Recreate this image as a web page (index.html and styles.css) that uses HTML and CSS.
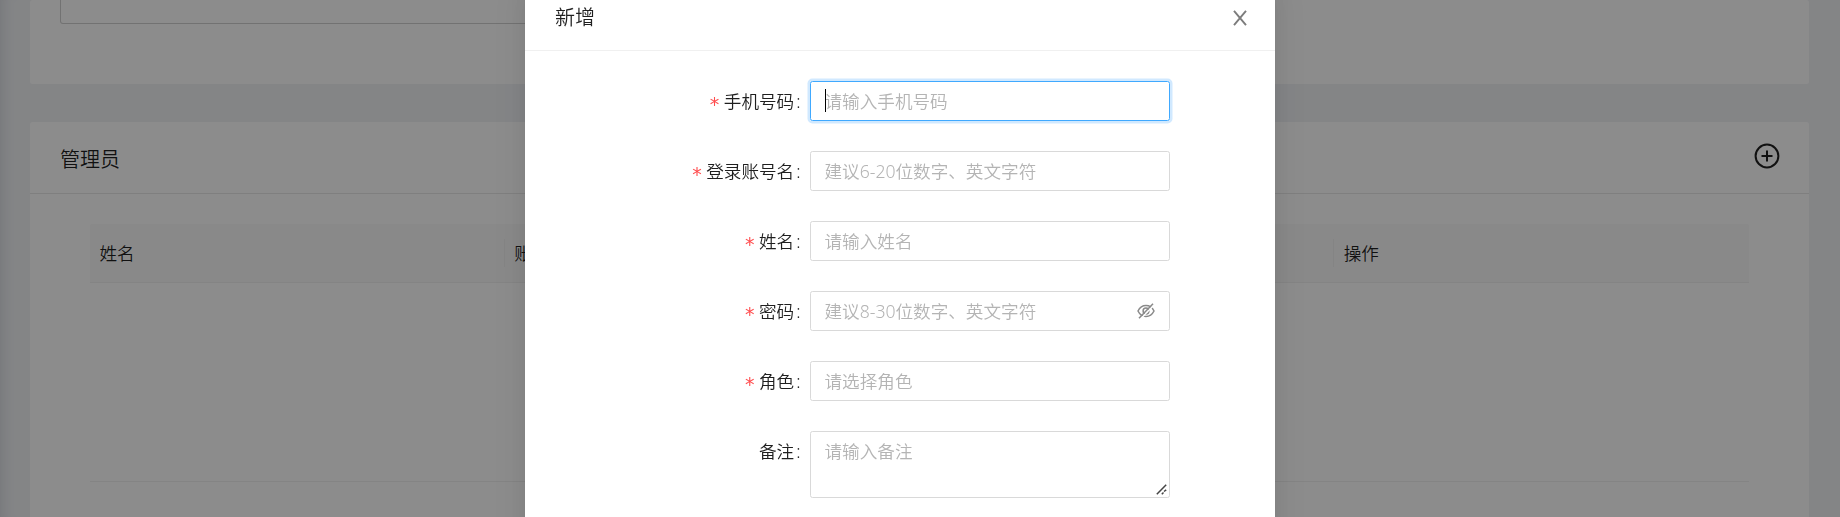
FILE: index.html
```html
<!DOCTYPE html>
<html lang="zh-CN">
<head>
<meta charset="utf-8">
<title>管理员</title>
<link rel="stylesheet" href="styles.css">
</head>
<body>
<main class="page">
  <section class="card card-top"><div class="top-field"></div></section>
  <section class="card card-admin">
    <header class="card-head">
      <h2 class="card-title">管理员</h2>
      <svg class="plus" viewBox="0 0 28 28"><circle cx="14" cy="14" r="11.4"/><path d="M14 8.5v11M8.5 14h11"/></svg>
    </header>
    <div class="table">
      <div class="row-head">
        <div class="cell">姓名</div><div class="cell">账号</div><div class="cell">角色</div><div class="cell">操作</div>
      </div>
      <div class="table-empty"></div>
    </div>
  </section>
</main>
<div class="mask">
  <div class="modal">
    <header class="modal-head">
      <h3 class="modal-title">新增</h3>
      <svg class="close" viewBox="0 0 14 16"><path d="M1 .8 13 15.2M13 .8 1 15.2"/></svg>
    </header>
    <form class="form">
      <div class="item"><label class="label"><span class="star">*</span>手机号码<span class="colon">:</span></label><div class="input focused"><span class="caret"></span>请输入手机号码</div></div>
      <div class="item"><label class="label"><span class="star">*</span>登录账号名<span class="colon">:</span></label><div class="input">建议6-20位数字、英文字符</div></div>
      <div class="item"><label class="label"><span class="star">*</span>姓名<span class="colon">:</span></label><div class="input">请输入姓名</div></div>
      <div class="item"><label class="label"><span class="star">*</span>密码<span class="colon">:</span></label><div class="input"><span>建议8-30位数字、英文字符</span>
        <svg class="eye" viewBox="0 0 18 18"><path d="M1 9C4.600 1.700 13.400 1.700 17 9C13.400 16.300 4.600 16.300 1 9Z"/><circle cx="9" cy="9" r="2.900"/><path class="gap" d="M3 17.500 17 3"/><path d="M2 16.300 16 1.700"/></svg></div></div>
      <div class="item"><label class="label"><span class="star">*</span>角色<span class="colon">:</span></label><div class="input">请选择角色</div></div>
      <div class="item"><label class="label">备注<span class="colon">:</span></label><div class="input area">请输入备注<svg class="grip" viewBox="0 0 11 11"><path d="M.8 10.200 10.200.8M5.800 10.200 7.500 8.500M8 7.500 10.200 5.800"/></svg></div></div>
    </form>
  </div>
</div>
</body>
</html>
```

FILE: styles.css
```css
* { box-sizing: border-box; }
html, body { height: 100%; overflow: hidden; }
body {
  margin: 0;
  font: 350 17.6px/26px "Noto Sans", "Noto Sans CJK SC", sans-serif;
  color: rgba(0, 0, 0, .88);
  background: #f0f2f5;
}
h2, h3 { margin: 0; font-size: 20px; font-weight: 350; }
.page {
  height: 517px;
  padding: 0 31px 0 30px;
  overflow: hidden;
  box-shadow: inset 14px 0 14px -12px rgba(0, 21, 41, .12);
}
.card { background: #fff; border-radius: 2.500px; }
.card-top { height: 84px; margin-bottom: 38px; padding-left: 30px; }
.top-field { width: 1000px; height: 24px; border: 1px solid #d0d0d0; border-top: 0; border-radius: 0 0 3px 3px; }
.card-admin { height: 500px; }
.card-head {
  display: flex;
  align-items: center;
  justify-content: space-between;
  height: 72px;
  padding: 0 28.500px 0 30px;
  border-bottom: 1px solid #e8e8e8;
}
.card-title { line-height: 30px; padding-top: 4px; }
.plus { width: 28px; height: 28px; margin-top: -4px; fill: none; stroke: #202020; stroke-width: 2; }
.table { padding: 30px 60px 0; }
.row-head {
  display: grid;
  grid-template-columns: repeat(4, 1fr);
  align-items: center;
  height: 59px;
  background: #fafafa;
  border-bottom: 1px solid #f0f0f0;
  border-radius: 2px 2px 0 0;
}
.cell { height: 28px; padding-left: 9.500px; line-height: 28px; border-right: 1px solid #f0f0f0; }
.cell:last-child { border-right: 0; }
.table-empty { height: 199px; border-bottom: 1px solid #f0f0f0; }
.mask {
  position: fixed;
  inset: 0;
  display: flex;
  justify-content: center;
  padding-right: 40px;
  background: rgba(0, 0, 0, .45);
}
.modal {
  width: 750px;
  height: 600px;
  margin-top: -18px;
  flex: none;
  background: #fff;
  box-shadow: 0 4px 8px -5px rgba(0, 0, 0, .12), 0 8px 20px rgba(0, 0, 0, .08), 0 11px 35px 10px rgba(0, 0, 0, .05);
}
.modal-head {
  display: flex;
  align-items: center;
  justify-content: space-between;
  height: 69px;
  padding: 0 28px 0 30px;
  border-bottom: 1px solid #f0f0f0;
}
.modal-title { padding-top: 4px; line-height: 28px; }
.close { width: 14px; height: 16px; margin-top: 3px; fill: none; stroke: #7c7c7c; stroke-width: 1.900; }
.form { display: grid; gap: 30px; padding-top: 30px; }
.item { display: grid; grid-template-columns: 285px 360px; align-items: start; }
.label { display: flex; justify-content: flex-end; align-items: center; height: 40px; }
.star { height: 24px; margin-right: 4.500px; font-family: "DejaVu Sans", sans-serif; font-size: 19px; font-weight: 400; line-height: 30px; color: #ff4d4f; }
.colon { margin: 0 9.500px 0 2px; }
.input {
  position: relative;
  display: flex;
  justify-content: space-between;
  align-items: center;
  height: 40px;
  padding: 0 14px 0 13.500px;
  border: 1px solid #d9d9d9;
  border-radius: 2.500px;
  color: #b4b4b4;
}
.focused { border-color: #40a9ff; box-shadow: 0 0 0 2.500px rgba(24, 144, 255, .2); }
.caret { position: absolute; left: 14px; top: 7px; width: 1px; height: 23px; background: #000; }
.eye { width: 18px; height: 18px; fill: none; stroke: #8a8a8a; stroke-width: 1.500; }
.eye .gap { stroke: #fff; }
.area { height: 67px; align-items: flex-start; padding-top: 6px; }
.grip { position: absolute; right: 2px; bottom: 2px; width: 11px; height: 11px; fill: none; stroke: #444; stroke-width: 1.500; }
```
